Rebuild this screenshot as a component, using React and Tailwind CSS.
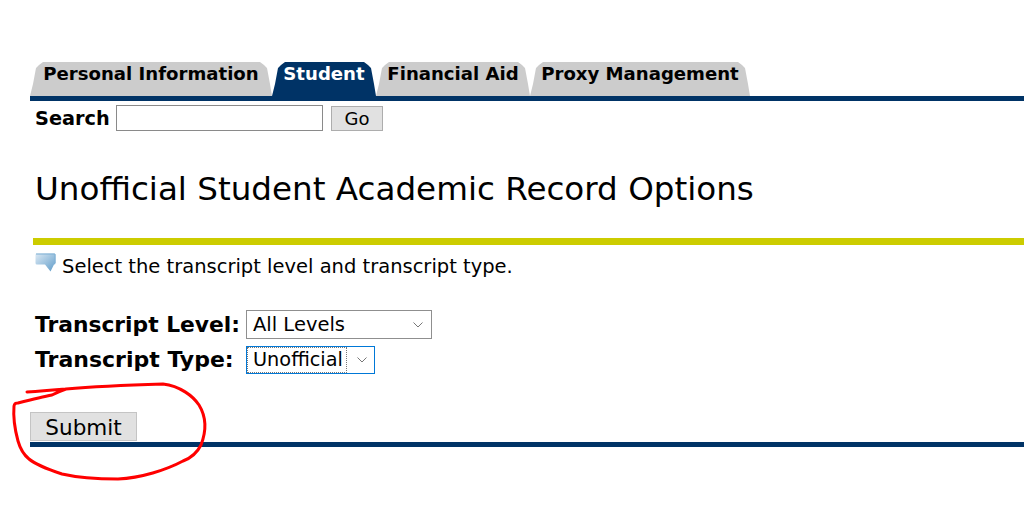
const font = { fontFamily: '"DejaVu Sans", Verdana, sans-serif' };

const tabs = [
  { label: "Personal Information", width: "w-[242px]", active: false },
  { label: "Student", width: "w-[104px]", active: true },
  { label: "Financial Aid", width: "w-[154px]", active: false },
  { label: "Proxy Management", width: "w-[220px]", active: false },
];

function Tab({ label, width, active }) {
  return (
    <div
      className={`${width} h-[34px] flex items-start justify-center pt-[1px] text-[18.1px] leading-[22px] font-bold [clip-path:polygon(0_100%,3px_65%,6px_18%,9px_3px,13px_0,calc(100%-12px)_0,calc(100%-8px)_3px,calc(100%-5px)_18%,calc(100%-2px)_65%,100%_100%)] ${
        active ? "bg-[#003366] text-white" : "bg-[#cccccc] text-black"
      }`}
    >
      {label}
    </div>
  );
}

function Chevron() {
  return (
    <svg width="10" height="6" viewBox="0 0 10 6" fill="none" stroke="#777777" strokeWidth="1">
      <path d="M0.5 0.5 L5 5 L9.5 0.5" />
    </svg>
  );
}

function SpeechIcon() {
  return (
    <svg width="21" height="20" viewBox="0 0 21 20" className="shrink-0">
      <defs>
        <linearGradient id="bubble" x1="0" y1="0" x2="1" y2="1">
          <stop offset="0" stopColor="#dce9f4" />
          <stop offset="1" stopColor="#5f9cc9" />
        </linearGradient>
      </defs>
      <path d="M1.5 0.5 H19 Q20.5 0.5 20.5 2 V10 Q20.5 11.5 19 11.5 L15.5 18.5 L10 11.5 H2 Q0.5 11.5 0.5 10 V2 Q0.5 0.5 1.5 0.5 Z" fill="url(#bubble)" />
      <path d="M1 1 H20 V10" fill="none" stroke="#7fb0d4" strokeWidth="1" />
    </svg>
  );
}

function RedCircle() {
  return (
    <svg className="absolute left-0 top-0 pointer-events-none" width="1024" height="517" fill="none">
      <path
        d="M27 392 C45 391 55 390 66 389 C100 386 130 385 163 384 C180 386 193 396 199 405 C207 418 206 432 201 445 C197 453 191 458 183 461 C166 470 141 478 118 479 C96 479 75 477 62 474 C50 470 36 465 29 459 C24 455 20 448 18 441 C15 430 13 418 14 406 C15 402 16 404 18 403 C30 400 42 397 52 395 C58 392 60 391 66 389"
        stroke="#ff0000"
        strokeWidth="3"
        strokeLinecap="round"
        strokeLinejoin="round"
      />
    </svg>
  );
}

export default function App() {
  return (
    <div className="relative min-h-[517px] bg-white text-black overflow-hidden" style={font}>
      <div className="pt-[62px] pl-[30px]">
        <div className="flex">
          {tabs.map((t) => (
            <Tab key={t.label} {...t} />
          ))}
        </div>
        <div className="h-[5px] bg-[#003366]" />

        <div className="flex items-center pl-[5px] mt-[4px] h-[26px]">
          <span className="text-[19.3px] font-bold leading-none w-[81px] pt-[2px]">Search</span>
          <div className="w-[207px] h-[26px] bg-white border border-[#8a8a8a]" />
          <div className="ml-[8px] w-[52px] h-[25px] bg-[#e1e1e1] border border-[#adadad] flex items-center justify-center text-[18px]">
            Go
          </div>
        </div>

        <h1 className="ml-[5px] mt-[36px] text-[32.6px] leading-[44px] font-normal">
          Unofficial Student Academic Record Options
        </h1>

        <div className="ml-[3px] mt-[27px] h-[7px] bg-[#cccc00]" />

        <div className="flex items-center ml-[5px] mt-[8px] h-[20px]">
          <SpeechIcon />
          <span className="ml-[6px] mt-[7px] text-[19.5px] leading-none">Select the transcript level and transcript type.</span>
        </div>

        <div className="mt-[37px] ml-[5px] flex items-center h-[29px]">
          <span className="w-[211px] text-[21.8px] font-bold leading-none">Transcript Level:</span>
          <div className="w-[186px] h-[29px] border border-[#8f8f8f] bg-white flex items-center justify-between pl-[6px] pr-[8px] pt-[1px] text-[19.5px]">
            All Levels
            <Chevron />
          </div>
        </div>

        <div className="mt-[7px] ml-[5px] flex items-center h-[28px]">
          <span className="w-[211px] text-[22px] font-bold leading-none">Transcript Type:</span>
          <div className="w-[129px] h-[28px] border border-[#0078d7] bg-white flex items-center justify-between pr-[7px] text-[19.3px]">
            <span className="h-full pl-[5px] pr-[3px] flex items-center border border-dotted border-[#777777]">Unofficial</span>
            <Chevron />
          </div>
        </div>

        <div className="mt-[38px] w-[107px] h-[29px] bg-[#e1e1e1] border border-[#c4c4c4] flex items-center justify-center pt-[3px] text-[21.5px]">
          Submit
        </div>
        <div className="mt-[1px] h-[5px] bg-[#003366]" />
      </div>
      <RedCircle />
    </div>
  );
}
